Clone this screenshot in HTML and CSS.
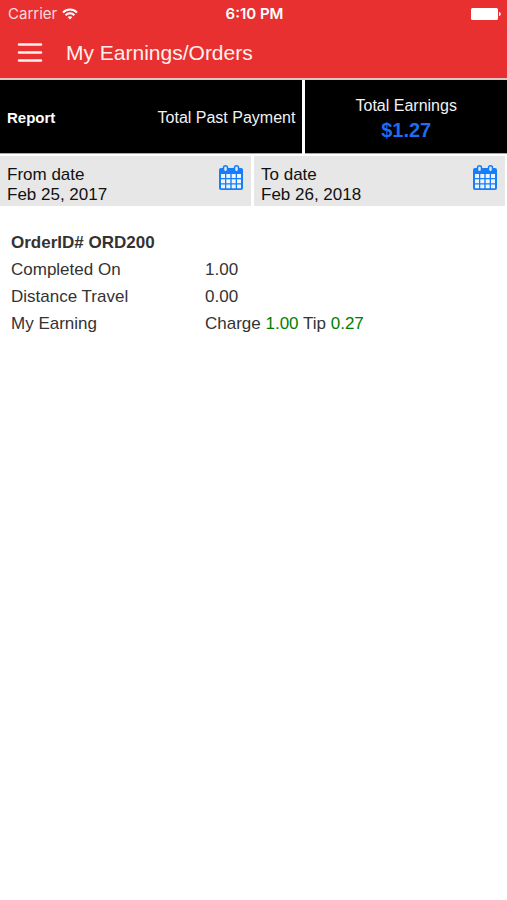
FILE: index.html
```html
<!DOCTYPE html>
<html lang="en">
<head>
  <meta charset="UTF-8">
  <meta name="viewport" content="width=device-width, initial-scale=1">
  <title>My Earnings/Orders</title>
  <link rel="stylesheet" href="styles.css">
</head>
<body>
  <header class="header">
    <div class="status-bar">
      <div class="carrier">
        <span>Carrier</span>
        <svg class="wifi" viewBox="0 0 16 12" fill="none" stroke="currentColor" stroke-width="2">
          <path d="M1 4.6C5 .6 11 .6 15 4.6"/>
          <path d="M3.6 7.2c2.5-2.5 6.3-2.5 8.8 0"/>
          <path d="M8 11.6 5.6 9.1c1.4-1.2 3.4-1.2 4.8 0z" fill="currentColor" stroke="none"/>
        </svg>
      </div>
      <span class="time">6:10 PM</span>
      <svg class="battery" viewBox="0 0 30 12" fill="currentColor">
        <rect x="0" y="0" width="27" height="12" rx="1.5"/>
        <path d="M28 4c2.4.6 2.4 3.4 0 4z"/>
      </svg>
    </div>
    <div class="nav-bar">
      <button type="button" class="menu-button" aria-label="Menu">
        <svg viewBox="0 0 26 20" stroke="currentColor" stroke-width="2.6" stroke-linecap="round">
          <path d="M2 1.500h22M2 9.500h22M2 17.500h22"/>
        </svg>
      </button>
      <h1>My Earnings/Orders</h1>
    </div>
  </header>

  <main>
    <section class="summary">
      <div class="summary-report">
        <h2>Report</h2>
        <span>Total Past Payment</span>
      </div>
      <div class="summary-total">
        <span>Total Earnings</span>
        <strong>$1.27</strong>
      </div>
    </section>

    <section class="dates">
      <button type="button" class="date-button">
        <span class="date-text">
          <span>From date</span>
          <span>Feb 25, 2017</span>
        </span>
        <svg class="calendar" viewBox="0 0 24 26">
          <path class="calendar-body" d="M2 3h20a2 2 0 0 1 2 2v18a2 2 0 0 1-2 2H2a2 2 0 0 1-2-2V5a2 2 0 0 1 2-2z"/>
          <path class="calendar-cells" d="M2 9h4v4H2zM7.3 9h4v4h-4zM12.7 9h4v4h-4zM18 9h4v4h-4zM2 14.2h4v4H2zM7.3 14.2h4v4h-4zM12.7 14.2h4v4h-4zM18 14.2h4v4h-4zM2 19.4h4v3.8H2zM7.3 19.4h4v3.8h-4zM12.7 19.4h4v3.8h-4zM18 19.4h4v3.8h-4z"/>
          <rect class="calendar-ring" x="4.5" y="0.8" width="4" height="6" rx="2"/>
          <rect class="calendar-ring" x="15.5" y="0.8" width="4" height="6" rx="2"/>
        </svg>
      </button>
      <button type="button" class="date-button">
        <span class="date-text">
          <span>To date</span>
          <span>Feb 26, 2018</span>
        </span>
        <svg class="calendar" viewBox="0 0 24 26">
          <path class="calendar-body" d="M2 3h20a2 2 0 0 1 2 2v18a2 2 0 0 1-2 2H2a2 2 0 0 1-2-2V5a2 2 0 0 1 2-2z"/>
          <path class="calendar-cells" d="M2 9h4v4H2zM7.3 9h4v4h-4zM12.7 9h4v4h-4zM18 9h4v4h-4zM2 14.2h4v4H2zM7.3 14.2h4v4h-4zM12.7 14.2h4v4h-4zM18 14.2h4v4h-4zM2 19.4h4v3.8H2zM7.3 19.4h4v3.8h-4zM12.7 19.4h4v3.8h-4zM18 19.4h4v3.8h-4z"/>
          <rect class="calendar-ring" x="4.5" y="0.8" width="4" height="6" rx="2"/>
          <rect class="calendar-ring" x="15.5" y="0.8" width="4" height="6" rx="2"/>
        </svg>
      </button>
    </section>

    <table class="order">
      <caption>OrderID# ORD200</caption>
      <tbody>
        <tr>
          <th scope="row">Completed On</th>
          <td>1.00</td>
        </tr>
        <tr>
          <th scope="row">Distance Travel</th>
          <td>0.00</td>
        </tr>
        <tr>
          <th scope="row">My Earning</th>
          <td>Charge <span class="amount">1.00</span> Tip <span class="amount">0.27</span></td>
        </tr>
      </tbody>
    </table>
  </main>
</body>
</html>
```

FILE: styles.css
```css
* {
  box-sizing: border-box;
}
body {
  margin: 0;
  background-color: #fff;
  color: #333;
  font-family: "Liberation Sans", Arial, Helvetica, sans-serif;
  font-size: 17px;
}
h1,
h2 {
  margin: 0;
}
button {
  border: none;
  font: inherit;
  cursor: pointer;
}
svg {
  display: block;
}

/* Header */
.header {
  background-color: #e83030;
  color: #fff;
  border-bottom: 2px solid #e0c4c0;
}
.status-bar {
  display: grid;
  grid-template-columns: 1fr auto 1fr;
  align-items: center;
  height: 27px;
  padding: 0 6px 0 8px;
  font-family: Inter, "Liberation Sans", sans-serif;
  font-size: 15px;
}
.carrier {
  display: flex;
  align-items: center;
  gap: 5px;
  color: #fbdcdc;
}
.wifi {
  width: 16px;
  height: 12px;
  color: #fff;
}
.time {
  font-weight: 600;
}
.battery {
  width: 30px;
  height: 12px;
  justify-self: end;
}
.nav-bar {
  display: flex;
  align-items: center;
  gap: 23px;
  height: 51px;
  padding: 0 17px;
}
.menu-button {
  padding: 0;
  background: none;
  color: #fff0ee;
}
.menu-button svg {
  width: 26px;
  height: 20px;
}
h1 {
  color: #fff0ee;
  font-size: 21px;
  font-weight: 400;
}

/* Totals */
.summary {
  display: grid;
  grid-template-columns: 3fr 2fr;
  gap: 3px;
  font-size: 16px;
}
.summary-report,
.summary-total {
  display: flex;
  height: 74px;
  padding: 2px 7px 0;
  background-color: #000;
  color: #f2f2f2;
  border-bottom: 1px solid #aaa;
}
.summary-report {
  align-items: center;
  justify-content: space-between;
}
.summary-total {
  flex-direction: column;
  align-items: center;
  justify-content: center;
  line-height: 24px;
}
h2 {
  color: #fff;
  font-size: 15px;
}
.summary-total strong {
  color: #1d6cf2;
  font-size: 20px;
}

/* Date range */
.dates {
  display: grid;
  grid-template-columns: 1fr 1fr;
  gap: 3px;
  padding: 2px 2px 0 0;
}
.date-button {
  display: flex;
  align-items: flex-start;
  justify-content: space-between;
  padding: 9px 8px 1px 7px;
  background-color: #e7e7e7;
  color: #111;
  line-height: 20px;
  text-align: left;
}
.date-text {
  display: flex;
  flex-direction: column;
}
.calendar {
  width: 24px;
  height: 26px;
}
.calendar-body {
  fill: #147efb;
}
.calendar-cells {
  fill: #eef3fa;
}
.calendar-ring {
  fill: #e7e7e7;
  stroke: #147efb;
  stroke-width: 1.5;
}

/* Order */
.order {
  width: 100%;
  margin-top: 23px;
  border-collapse: collapse;
  line-height: 27px;
  text-align: left;
}
.order caption {
  padding-left: 11px;
  font-weight: 700;
  text-align: left;
}
.order th {
  width: 205px;
  padding: 0 0 0 11px;
  font-weight: 400;
}
.order td {
  padding: 0;
}
.amount {
  color: #008000;
}
```
